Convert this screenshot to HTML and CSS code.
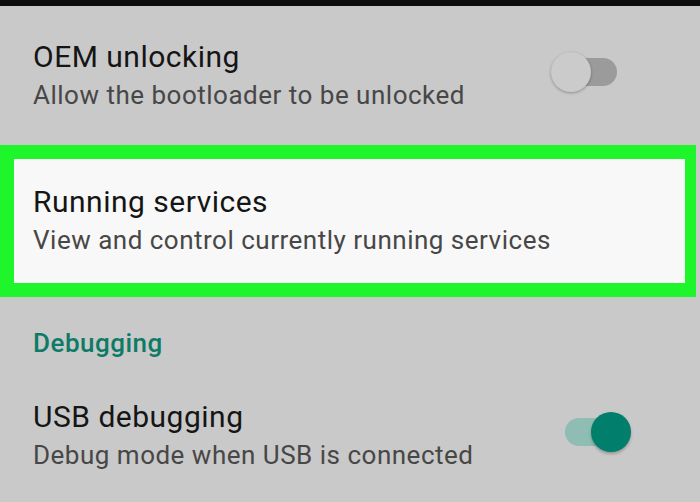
FILE: index.html
```html
<!DOCTYPE html>
<html>
<head>
<meta charset="utf-8">
<link rel="stylesheet" href="styles.css">
</head>
<body>
<div class="topbar"></div>
<div class="item item-oem">
  <div class="text">
    <div class="title">OEM unlocking</div>
    <div class="summary">Allow the bootloader to be unlocked</div>
  </div>
  <div class="switch switch-off">
    <div class="track"></div>
    <div class="thumb"></div>
  </div>
</div>
<div class="highlight">
  <div class="item item-running">
    <div class="text">
      <div class="title">Running services</div>
      <div class="summary">View and control currently running services</div>
    </div>
  </div>
</div>
<div class="category">Debugging</div>
<div class="item item-usb">
  <div class="text">
    <div class="title">USB debugging</div>
    <div class="summary">Debug mode when USB is connected</div>
  </div>
  <div class="switch switch-on">
    <div class="track"></div>
    <div class="thumb"></div>
  </div>
</div>
</body>
</html>
```
FILE: styles.css
```css
html, body {
  margin: 0;
  padding: 0;
}
body {
  width: 700px;
  height: 502px;
  overflow: hidden;
  background: #c9c9c9;
  font-family: Roboto, "Noto Sans", sans-serif;
  letter-spacing: 0.5px;
}
.topbar {
  height: 6px;
  background: #0d0d0d;
}
.item {
  display: flex;
  align-items: flex-start;
  padding-left: 33px;
}
.text {
  flex: 1;
}
.title {
  font-size: 30px;
  line-height: 36px;
  color: #151515;
}
.summary {
  font-size: 26px;
  line-height: 40px;
  color: #474747;
}
.item-oem {
  padding-top: 33px;
  padding-bottom: 30px;
}
.highlight {
  margin-right: 4px;
  border: 14px solid #1ff52b;
  border-right-width: 11px;
  background: #f8f8f8;
}
.item-running {
  padding-left: 19px;
  padding-top: 25px;
  padding-bottom: 23px;
}
.category {
  margin-top: 31px;
  padding-left: 33px;
  font-size: 26px;
  line-height: 30px;
  font-weight: 500;
  color: #0d7b67;
}
.item-usb {
  padding-top: 41px;
}
.switch {
  position: relative;
  width: 66px;
  height: 40px;
  margin-top: 13px;
}
.track {
  position: absolute;
  top: 6px;
  width: 56px;
  height: 28px;
  border-radius: 14px;
}
.thumb {
  position: absolute;
  top: 0;
  width: 40px;
  height: 40px;
  border-radius: 50%;
}
.switch-off {
  margin-right: 83px;
}
.switch-off .track {
  right: 0;
  background: #9b9b9b;
}
.switch-off .thumb {
  left: 0;
  background: #cbcbcb;
  box-shadow: 0 1px 3px rgba(0, 0, 0, 0.3);
}
.switch-on {
  margin-right: 69px;
}
.switch-on .track {
  left: 0;
  background: #8fbdb4;
}
.switch-on .thumb {
  right: 0;
  background: #017f6c;
  box-shadow: 0 2px 3px rgba(0, 0, 0, 0.25);
}
```
